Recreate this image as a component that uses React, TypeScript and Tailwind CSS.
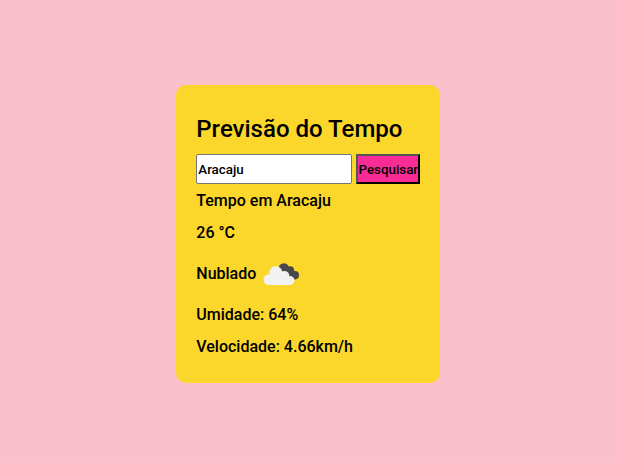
import React from "react";

function CloudIcon() {
  return (
    <svg width="50" height="50" viewBox="0 0 50 50" className="block">
      <g fill="#48484a">
        <circle cx="27.8" cy="19.5" r="5.3" />
        <circle cx="34.2" cy="21.2" r="3.9" />
        <circle cx="38.9" cy="26.2" r="4.1" />
        <path d="M25 18h10l5 6v6.2h-6l-9-6z" />
      </g>
      <g fill="#f2f2f2">
        <circle cx="19.8" cy="23.5" r="6.5" />
        <circle cx="12.9" cy="30.6" r="5.4" />
        <circle cx="28.4" cy="27" r="5" />
        <circle cx="33.9" cy="31.5" r="4.5" />
        <path d="M14 24h16l4 5v7H12.9z" />
      </g>
    </svg>
  );
}

export default function App() {
  return (
    <div className="flex h-[463px] w-full items-start justify-center bg-[#fac0cb] pt-[85px] pr-[0.4px] font-['Roboto',sans-serif] font-medium text-black">
      <main className="h-[298px] w-[264px] rounded-[10px] bg-[#fad72a] px-5 pt-[29px]">
        <h1 className="text-2xl leading-[30px] whitespace-nowrap">Previsão do Tempo</h1>
        <div className="mt-[10px] flex gap-1">
          <input
            defaultValue="Aracaju"
            className="h-[30px] w-[156px] rounded-[2px] border border-[#767676] bg-white px-px text-[13.3333px] outline-none"
          />
          <button className="h-[30px] w-16 border-2 border-black bg-[#f92c96] pt-px text-[13.3333px] whitespace-nowrap [border-style:outset]">
            Pesquisar
          </button>
        </div>
        <p className="mt-[7px] leading-5">Tempo em Aracaju</p>
        <p className="mt-3 leading-5">26 °C</p>
        <div className="mt-[6px] flex h-[50px] items-center">
          <p>Nublado</p>
          <CloudIcon />
        </div>
        <p className="mt-[6px] leading-5">Umidade: 64%</p>
        <p className="mt-3 leading-5">Velocidade: 4.66km/h</p>
      </main>
    </div>
  );
}
